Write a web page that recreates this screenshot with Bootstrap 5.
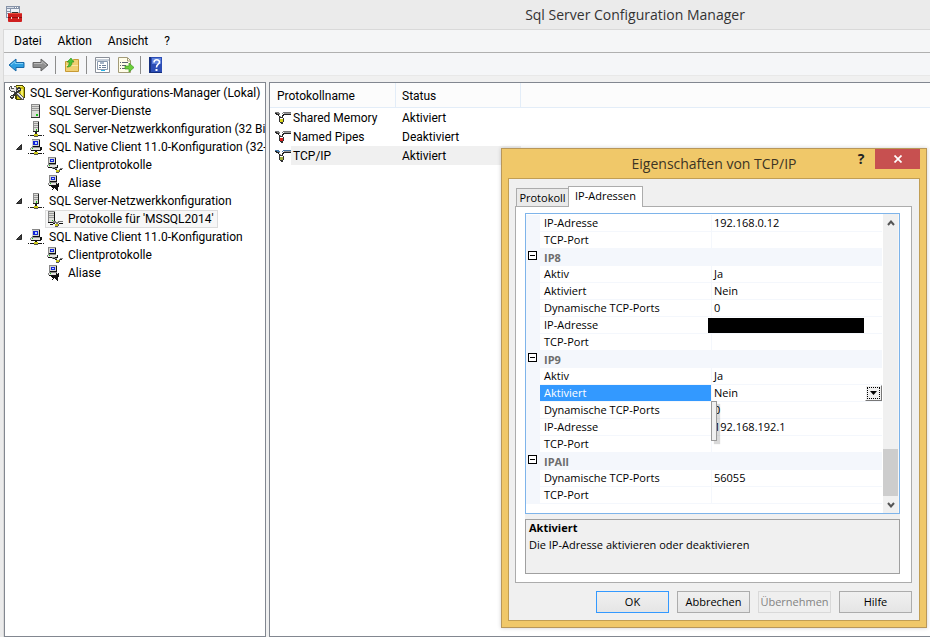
<!DOCTYPE html>
<html lang="de">
<head>
<meta charset="utf-8">
<meta name="viewport" content="width=device-width, initial-scale=1">
<title>Sql Server Configuration Manager</title>
<link rel="stylesheet" href="https://cdn.jsdelivr.net/npm/bootstrap@5.3.0/dist/css/bootstrap.min.css">
<style>
body{font:12px/18px "Open Sans","Noto Sans",sans-serif;color:#000;background:#ebebeb}
button{font:inherit;color:inherit;border:0;background:none;padding:0}
svg{display:block;flex:none}
.app-title{height:29px;font-size:14px;color:#333;padding-left:340px}
.app-icon{left:6px;top:6px}
.app-body{margin-left:3px;border:1px solid #d9d9d9;border-width:1px 0 0 1px;background:#f0f0f0}
.ui-text{font-family:Roboto,"Open Sans",sans-serif}
.menu-strip{background:#f5f6f7;height:23px;border-bottom:1px solid #b0b0b0;padding-left:10px;gap:16px}
.tool-strip{background:#f5f6f8;height:23px;border-bottom:1px solid #e8e8e8;padding:2px 0 0 4px;gap:7px}
.tool-sep{width:1px;height:18px;background:#8d8d8d;margin:0 1px 0 -1px}
.pane{background:#fff;border:1px solid #828790}
.panes{margin-top:6px}
.tree-pane{flex:0 0 262px;padding-top:1px}
.tree-pane ul{list-style:none;margin:0;padding:0}
.tree-row{height:18px;white-space:nowrap;gap:5px}
.tree-root{padding-left:4px}
.tree-l1{padding-left:10px}
.tree-l2{padding-left:42px}
.tree-exp{width:8px;flex:none}
.tree-sel{background:#f7f7f7;outline:1px solid #dcdcdc;outline-offset:-1px;margin-left:-2px;padding:0 4px 0 2px}
.list-pane{margin-left:3px;border-right:0}
.proto-list{width:100%;table-layout:fixed;border-collapse:separate;border-spacing:0}
.proto-list th{font-weight:400;height:25px;padding:1px 6px 0 7px;border:solid #e3edf8;border-width:0 1px 1px 0;background:#fcfcfc}
.proto-list th:last-child{border-right:0}
.proto-list td{height:19px;padding:0 6px}
.proto-list th:nth-child(2){padding-left:6px}
.proto-list td:first-child{padding-left:5px}
.proto-list td span{gap:2px}
.c-name{width:126px}.c-stat{width:125px}
.picked{background:#f0f0f0}
.picked-first{background:linear-gradient(90deg,#fff 21px,#f0f0f0 21px)}
.dlg{position:absolute;right:3px;top:148px;width:426px;background:#f0c869;border:1px solid #b8975a;padding:0 6px 6px;box-shadow:0 0 4px rgba(0,0,0,.2);font-size:11px;line-height:16px}
.dlg-head{height:29px;font-size:14px;color:#3c3424}
.dlg-tools{right:6px;top:0}
.dlg-x{width:45px;height:20px;background:#c75050;color:#fff}
.dlg-q{width:28px;height:20px;font-size:14px;font-weight:700;color:#222}
.dlg-in{background:#f0f0f0;border:1px solid #c19e54;padding:7px 7px 7px 6px}
.tab-row{padding-left:1px;margin-bottom:-1px;position:relative}
.tab-off{height:19px;border:1px solid #acacac;border-right:0;background:#eaeaea;width:52px}
.tab-on{height:21px;border:1px solid #acacac;border-bottom:0;background:#fff;width:75px;padding-bottom:2px}
.tab-body{background:#fff;border:1px solid #acacac;padding:6px 11px 8px 9px}
.pgrid{border:1px solid #7eb4ea;height:301px;background:#fff}
.ptab{flex:1;align-self:flex-start;table-layout:fixed;border-collapse:separate;border-spacing:0;margin-top:1px;width:100%}
.ptab td,.ptab th{height:17px;line-height:16px;padding:0 0 0 2px;border-bottom:1px solid #f4f7fc;font-weight:400;white-space:nowrap}
.ptab th{border-right:1px solid #f4f7fc;padding-left:4px}
.ptab td:first-child{background:#f4f7fc;padding:0}
.ptab .cat th{background:#f4f7fc;font-weight:700;color:#6d6d6d;padding-top:2px;line-height:14px}
.ptab .hot th{background:#39f;color:#fff}
.g-gut{width:14px}.g-key{width:172px}
.fold{display:block;width:9px;height:9px;border:1px solid #000;margin:-3px 0 0 2px;background:linear-gradient(#000,#000) center/5px 1px no-repeat #fff}
.drop{width:17px;height:16px;background:#f0f0f0;border:1px solid;border-color:#fff #777 #777 #fff;outline:0}
.drop span{width:13px;height:12px;border:1px dotted #000}
.redact{width:156px;height:15px;background:#000;margin-left:-6px}
.drag-tip{left:185px;top:187px;width:6px;height:40px;background:#f0f0f0;border:1px solid #9a9a9a;box-shadow:3px 3px 1px rgba(0,0,0,.15)}
.sbar{width:16px;background:#f0f0f0;margin-left:1px;border-right:1px solid #f7f7f7}
.sthumb{height:47px;background:#cdcdcd;margin-top:auto}
.sbtn{height:17px}
.hint-gap{height:5px;background:#f0f0f0}
.hint{background:#f0f0f0;border:1px solid #a0a0a0;height:55px;padding:0 3px;line-height:17px}
.hint strong{line-height:16px}
.dlg-foot{gap:8px;padding:8px 0 0}
.dbtn{width:73px;height:22px;border:1px solid #acacac;background:linear-gradient(#f0f0f0,#e5e5e5)}
.dbtn-def{border-color:#39f}
.dbtn:disabled{border-color:#d9d9d9;background:#efefef;color:#838383}
</style>
<script src="https://cdn.jsdelivr.net/npm/bootstrap@5.3.0/dist/js/bootstrap.bundle.min.js"></script>
</head>
<body>
<svg width="0" height="0" class="position-absolute" aria-hidden="true" shape-rendering="crispEdges">
<symbol id="i-server" viewBox="0 0 16 16"><path fill="#8c8c8c" d="M3 1h9v14H3z"/><path fill="#dcdcd8" d="M4 2h7v12H4z"/><path fill="#999" d="M4 3h7v1H4zM4 5h7v1H4zM4 7h7v1H4z"/><path fill="#333" d="M11 2h1v13H3v-1h8z"/><path fill="#19c319" d="M8 11h2v2H8z"/></symbol>
<symbol id="i-net" viewBox="0 0 16 16"><path fill="#8c8c8c" d="M5 0h6v11H5z"/><path fill="#dcdcd8" d="M6 1h4v9H6z"/><path fill="#999" d="M6 2h4v1H6zM6 4h4v1H6zM6 6h4v1H6z"/><path fill="#222" d="M10 1h1v10H5v-1h5zM7 11h2v2H7zM0 14h1v1H0zM2 14h4v1H2zM10 14h4v1h-4zM15 14h1v1h-1z"/><path fill="#19c319" d="M8 8h1v2H8z"/><path fill="#c9c416" d="M6 13h4v2H6z"/><path fill="#555" d="M6 15h4v1H6z"/></symbol>
<symbol id="i-client" viewBox="0 0 16 16"><path fill="#888" d="M4 0h8v8H4z"/><path fill="#d4d4d0" d="M4 1h7v6H4z"/><path fill="#1525d8" d="M5 2h5v4H5z"/><path fill="#b8d8ff" d="M7 3h2v2H7z"/><path fill="#111" d="M11 1h1v7H5V7h6z"/><path fill="#999" d="M3 8h9v1H3zM2 9h1v2H2z"/><path fill="#e4e4e0" d="M3 9h10v2H3z"/><path fill="#19c319" d="M4 9h1v1H4z"/><path fill="#111" d="M12 8h2v3h-1v1H3v-1h9zM7 12h2v1H7zM0 14h1v1H0zM2 14h4v1H2zM10 14h4v1h-4zM15 14h1v1h-1z"/><path fill="#c9c416" d="M6 13h4v2H6z"/><path fill="#555" d="M6 15h4v1H6z"/></symbol>
<symbol id="i-pc" viewBox="0 0 16 16"><path fill="#888" d="M1 0h8v7H1z"/><path fill="#d4d4d0" d="M2 1h6v6H2z"/><path fill="#1525d8" d="M3 2h4v3H3z"/><path fill="#b8d8ff" d="M4 3h2v1H4z"/><path fill="#111" d="M8 1h1v6H2V6h6z"/><path fill="#888" d="M1 7h8v1H1zM0 8h1v2H0z"/><path fill="#e4e4e0" d="M1 8h9v2H1z"/><path fill="#19c319" d="M2 8h1v1H2z"/><path fill="#111" d="M10 8h1v3H1v-1h9z"/></symbol>
<symbol id="i-cprot" viewBox="0 0 16 16"><use href="#i-pc" width="16" height="16"/><path fill="#888" d="M5 10h3v1h2v2h2v-1h1v-1h3v1h-2v1h-1v1h-3v-1H8v-1H5z"/><path fill="#222" d="M6 11h2v1H6zM13 12h2v1h-2zM8 12h2v1H8z"/><path fill="#c9c416" d="M9 13h3v2H9z"/><path fill="#555" d="M12 13h1v2h-1v1H9v-1h3z"/></symbol>
<symbol id="i-alias" viewBox="0 0 16 16"><use href="#i-pc" x="1" width="16" height="16"/><path fill="#111" d="M4 10h5V8h1v1h1v1h1v2h-1v4h-1v-1H9v-1H8v-1H7v1H6v1H5v-1h1v-1H5v-1H4z"/></symbol>
<symbol id="i-sprot" viewBox="0 0 16 16"><path fill="#888" d="M1 0h7v12H1z"/><path fill="#dcdcd8" d="M2 1h5v10H2z"/><path fill="#999" d="M2 2h5v1H2zM2 4h5v1H2zM2 6h5v1H2z"/><path fill="#111" d="M7 1h1v11H1v-1h6zM3 13h3v1H3z"/><path fill="#19c319" d="M5 9h1v1H5z"/><path fill="#777" d="M6 10h3v1h2v-1h5v1h-4v1h-1v2H9v-2H6z"/><path fill="#111" d="M12 12h4v1h-4zM6 12h2v1H6z"/><path fill="#c9c416" d="M8 13h3v2H8z"/><path fill="#555" d="M11 13h1v2h-1v1H8v-1h3z"/></symbol>
<symbol id="i-plug" viewBox="0 0 16 14"><path fill="currentColor" d="M0 1h4v1h1v1H2V2H0zM8 1h8v1H8zM7 2h1v1H7z"/><path fill="#222" d="M0 2h2v1h2v2h1v1H4V5H3V4H1V3H0zM9 3h7v1H9v1H8v1H7V4h1V3z"/><path fill="#999" d="M4 3h1v2h1v1H5V4H4zM9 2h7v1H9z"/><path fill="#333" d="M4 6h4v1H4zM4 7h1v4H4zM8 7h1v4H8zM5 11h3v1H5zM6 12h2v1H6z"/></symbol>
<symbol id="i-root" viewBox="0 0 16 16"><path fill="#4a4600" d="M7 0h7v1h1v1h1v11h-1v1h-1v1H7v-1H6V1h1z"/><path fill="#c9be12" d="M7 1h7v1h1v11h-1v1H8V8H7z"/><path fill="#f6f06a" d="M8 1h5v1H8zM12 4h2v7h-2z"/><path fill="#555" d="M1 1h2v2h2V1h2v1h1v4h1v1h1v1h1v1h1v1h1v1h1v1h1v3h-3v-1h-1v-1h-1v-1H9v-1H8v-1H7V9H6V8H5V7H2V6H1V5H0V2h1z"/><path fill="#e8e8e8" d="M1 2h1v2h3V2h2v4h1v1h1v1h1v1h1v1h1v1h1v1h1v2h-1v-1h-1v-1h-1v-1h-1v-1H9v-1H8V9H7V8H6V6H2V5H1z"/><path fill="#333" d="M9 2h2v1h1v3h-1v1H9v1H8v1H7v1H6v1H5v2H4v1H2v-1H1v-2h1v-1h2V9h1V8h1V7h1V6h1V3h1z"/><path fill="#ddd" d="M9 4h2v1H9v1H8v1H7v1H6v1H5v1H4v2H2v-1h2v-1h1V9h1V8h1V7h1V5h1z"/></symbol>
</svg>

<div class="vh-100 d-flex flex-column overflow-hidden position-relative">
<header class="app-title d-flex align-items-center justify-content-center flex-shrink-0 position-relative">
<svg class="app-icon position-absolute" width="16" height="16" viewBox="0 0 16 16"><path fill="#8693a8" d="M0 0h14v12H0z"/><path fill="#eef2f8" d="M1 3h12v8H1z"/><path fill="#d6dbe6" d="M1 1h7v1H1z"/><path fill="#fff" d="M9 1h1v1H9zM11 1h1v1h-1z"/><path fill="#8693a8" d="M1 5h4v1H1zM1 7h3v1H1zM4 3h1v4H4z"/><path d="M6 8V6.500h6V8" fill="none" stroke="#333"/><rect x="2" y="7" width="14" height="9" rx="1" fill="#cf1f1f"/><path fill="#8e1010" d="M2 11h14v1H2z"/><path fill="#e8503f" d="M3 7h12v1H3z"/><path fill="#f5d6d0" d="M5 11h1v2H5zM12 11h1v2h-1z"/></svg>
<span>Sql Server Configuration Manager</span>
</header>
<div class="app-body ui-text flex-fill d-flex flex-column">
<nav class="menu-strip d-flex align-items-center flex-shrink-0" aria-label="Menü"><button>Datei</button><button>Aktion</button><button>Ansicht</button><button>?</button></nav>
<div class="tool-strip d-flex align-items-center flex-shrink-0" role="toolbar">
<button aria-label="Zurück"><svg width="17" height="16" viewBox="0 0 17 16"><path d="M1 8l7-6v3.500h8v5H8V14z" fill="#2f9fe0" stroke="#1769a8"/><path d="M3 8l4-3.500V6.500h8" fill="none" stroke="#7fd0f7"/></svg></button>
<button aria-label="Vor"><svg width="17" height="16" viewBox="0 0 17 16"><path d="M16 8L9 2v3.500H1v5h8V14z" fill="#8f8f8f" stroke="#666"/><path d="M14 8l-4-3.500V6.500H2" fill="none" stroke="#bbb"/></svg></button>
<span class="tool-sep"></span>
<button aria-label="Aufwärts"><svg width="16" height="16" viewBox="0 0 16 16"><path d="M1.500 4.500h7l1-2h5v12h-13z" fill="#f0cf72" stroke="#c79a35"/><path d="M2 8h12v1H2z" fill="#fbe6a4"/><path d="M3 10C7 10 8 8 8 5h2L7 1 3 5h2c0 2 0 4-2 5z" fill="#4fc436" stroke="#2b8f1d" stroke-width=".6"/></svg></button>
<span class="tool-sep"></span>
<button aria-label="Eigenschaften"><svg width="16" height="16" viewBox="0 0 16 16"><path d="M.500 .500h14v15h-14z" fill="#fff" stroke="#8a8f98"/><path d="M1 3h13M2.500 4.500h10v8h-10z" fill="none" stroke="#8a9ab0"/><path d="M5 5h4v2H5z" fill="#a8b6c8"/><path d="M4 8.500h2M7 8.500h4M4 10.500h2M7 10.500h4" stroke="#6d7f99"/><path d="M6 13h4v1H6z" fill="#27b4e8"/></svg></button>
<button aria-label="Liste exportieren"><svg width="16" height="16" viewBox="0 0 16 16"><path d="M.500 .500h9l3 3v12H.500z" fill="#fffde8" stroke="#a39b78"/><path d="M9.500 1v3h3" fill="none" stroke="#a39b78"/><path d="M2 5.500h1M4 5.500h6M2 8.500h1M4 8.500h4M2 11.500h1M4 11.500h5" stroke="#5c6470"/><path d="M7 9h4V6l5 4.500-5 4.500v-3H7z" fill="#6bd03a" stroke="#3f9a20" stroke-width=".7"/></svg></button>
<span class="tool-sep"></span>
<button aria-label="Hilfe"><svg width="13" height="16" viewBox="0 0 13 16"><path fill="#2c4db5" d="M0 0h13v16H0z"/><path fill="#16307f" d="M0 0h2v16H0zM2 15h11v1H2z"/><path fill="#5f82dc" d="M3 1h9v6H3z"/><path d="M5 5.500C5 2 10.500 2 10.500 5 10.500 7.500 7.500 7 7.500 10.500" fill="none" stroke="#fff" stroke-width="1.600"/><path fill="#fff" d="M6.500 12h2v2h-2z"/></svg></button>
</div>
<main class="panes d-flex flex-fill overflow-hidden">
<aside class="pane tree-pane overflow-hidden">
<ul role="tree">
<li class="tree-row tree-root d-flex align-items-center"><svg width="16" height="16" shape-rendering="crispEdges"><use href="#i-root"/></svg>SQL Server-Konfigurations-Manager (Lokal)</li>
<li class="tree-row tree-l1 d-flex align-items-center"><span class="tree-exp"></span><svg width="16" height="16" shape-rendering="crispEdges"><use href="#i-server"/></svg>SQL Server-Dienste</li>
<li class="tree-row tree-l1 d-flex align-items-center"><span class="tree-exp"></span><svg width="16" height="16" shape-rendering="crispEdges"><use href="#i-net"/></svg>SQL Server-Netzwerkkonfiguration (32 Bit)</li>
<li class="tree-row tree-l1 d-flex align-items-center"><svg class="tree-exp" width="8" height="8"><path d="M6.500 1.500v5h-5z" fill="#404040" stroke="#262626"/></svg><svg width="16" height="16" shape-rendering="crispEdges"><use href="#i-client"/></svg>SQL Native Client 11.0-Konfiguration (32-Bit)</li>
<li class="tree-row tree-l2 d-flex align-items-center"><svg width="16" height="16" shape-rendering="crispEdges"><use href="#i-cprot"/></svg>Clientprotokolle</li>
<li class="tree-row tree-l2 d-flex align-items-center"><svg width="16" height="16" shape-rendering="crispEdges"><use href="#i-alias"/></svg>Aliase</li>
<li class="tree-row tree-l1 d-flex align-items-center"><svg class="tree-exp" width="8" height="8"><path d="M6.500 1.500v5h-5z" fill="#404040" stroke="#262626"/></svg><svg width="16" height="16" shape-rendering="crispEdges"><use href="#i-net"/></svg>SQL Server-Netzwerkkonfiguration</li>
<li class="tree-row tree-l2 d-flex align-items-center"><span class="tree-sel tree-row d-flex align-items-center"><svg width="16" height="16" shape-rendering="crispEdges"><use href="#i-sprot"/></svg>Protokolle für 'MSSQL2014'</span></li>
<li class="tree-row tree-l1 d-flex align-items-center"><svg class="tree-exp" width="8" height="8"><path d="M6.500 1.500v5h-5z" fill="#404040" stroke="#262626"/></svg><svg width="16" height="16" shape-rendering="crispEdges"><use href="#i-client"/></svg>SQL Native Client 11.0-Konfiguration</li>
<li class="tree-row tree-l2 d-flex align-items-center"><svg width="16" height="16" shape-rendering="crispEdges"><use href="#i-cprot"/></svg>Clientprotokolle</li>
<li class="tree-row tree-l2 d-flex align-items-center"><svg width="16" height="16" shape-rendering="crispEdges"><use href="#i-alias"/></svg>Aliase</li>
</ul>
</aside>
<section class="pane list-pane flex-fill">
<table class="proto-list">
<colgroup><col class="c-name"><col class="c-stat"><col></colgroup>
<thead><tr><th>Protokollname</th><th>Status</th><th></th></tr></thead>
<tbody>
<tr><td><span class="d-flex align-items-center"><svg width="16" height="14" viewBox="0 0 16 14" shape-rendering="crispEdges" color="#777"><use href="#i-plug" width="16" height="14"/><path fill="#d8d41c" d="M5 8h3v3H5z"/></svg>Shared Memory</span></td><td>Aktiviert</td><td></td></tr>
<tr><td><span class="d-flex align-items-center"><svg width="16" height="14" viewBox="0 0 16 14" shape-rendering="crispEdges" color="#777"><use href="#i-plug" width="16" height="14"/><path fill="#d81c1c" d="M5 8h3v3H5z"/></svg>Named Pipes</span></td><td>Deaktiviert</td><td></td></tr>
<tr><td class="picked-first"><span class="d-flex align-items-center"><svg width="16" height="14" viewBox="0 0 16 14" shape-rendering="crispEdges" color="#4878a8"><use href="#i-plug" width="16" height="14"/><path fill="#9fae3c" d="M5 8h3v3H5z"/></svg>TCP/IP</span></td><td class="picked">Aktiviert</td><td></td></tr>
</tbody>
</table>
</section>
</main>
</div>

<div class="dlg" role="dialog" aria-labelledby="dlgTitle">
<div class="dlg-head d-flex align-items-center justify-content-center position-relative"><span id="dlgTitle">Eigenschaften von TCP/IP</span></div>
<div class="dlg-tools position-absolute d-flex"><button class="dlg-q" aria-label="Hilfe">?</button><button class="dlg-x d-flex align-items-center justify-content-center" aria-label="Schließen"><svg width="8" height="8" viewBox="0 0 8 8"><path d="M.500 .500l7 7M7.500 .500l-7 7" stroke="#fff" stroke-width="1.700"/></svg></button></div>
<div class="dlg-in">
<div class="tab-row d-flex align-items-end" role="tablist"><button class="tab-off" role="tab">Protokoll</button><button class="tab-on" role="tab" aria-selected="true">IP-Adressen</button></div>
<div class="tab-body">
<div class="pgrid d-flex position-relative">
<table class="ptab">
<colgroup><col class="g-gut"><col class="g-key"><col></colgroup>
<tbody>
<tr><td></td><th>IP-Adresse</th><td>192.168.0.12</td></tr>
<tr><td></td><th>TCP-Port</th><td></td></tr>
<tr class="cat"><td><button class="fold" aria-label="IP8 reduzieren"></button></td><th colspan="2">IP8</th></tr>
<tr><td></td><th>Aktiv</th><td>Ja</td></tr>
<tr><td></td><th>Aktiviert</th><td>Nein</td></tr>
<tr><td></td><th>Dynamische TCP-Ports</th><td>0</td></tr>
<tr><td></td><th>IP-Adresse</th><td><div class="redact"></div></td></tr>
<tr><td></td><th>TCP-Port</th><td></td></tr>
<tr class="cat"><td><button class="fold" aria-label="IP9 reduzieren"></button></td><th colspan="2">IP9</th></tr>
<tr><td></td><th>Aktiv</th><td>Ja</td></tr>
<tr class="hot"><td></td><th>Aktiviert</th><td><div class="d-flex justify-content-between"><span>Nein</span><button class="drop d-flex align-items-center justify-content-center" aria-label="Auswahl öffnen"><span class="d-flex align-items-center justify-content-center"><svg width="7" height="4"><path d="M0 0h7L3.500 4z"/></svg></span></button></div></td></tr>
<tr><td></td><th>Dynamische TCP-Ports</th><td>0</td></tr>
<tr><td></td><th>IP-Adresse</th><td>192.168.192.1</td></tr>
<tr><td></td><th>TCP-Port</th><td></td></tr>
<tr class="cat"><td><button class="fold" aria-label="IPAll reduzieren"></button></td><th colspan="2">IPAll</th></tr>
<tr><td></td><th>Dynamische TCP-Ports</th><td>56055</td></tr>
<tr><td></td><th>TCP-Port</th><td></td></tr>
</tbody>
</table>
<div class="drag-tip position-absolute"></div>
<div class="sbar d-flex flex-column flex-shrink-0"><button class="sbtn d-flex align-items-center justify-content-center" aria-label="Nach oben"><svg width="8" height="6"><path d="M1 5l3-3.500L7 5" fill="none" stroke="#555" stroke-width="2"/></svg></button><div class="sthumb"></div><button class="sbtn d-flex align-items-center justify-content-center" aria-label="Nach unten"><svg width="8" height="6"><path d="M1 1l3 3.500L7 1" fill="none" stroke="#555" stroke-width="2"/></svg></button></div>
</div>
<div class="hint-gap"></div>
<div class="hint"><strong class="d-block">Aktiviert</strong>Die IP-Adresse aktivieren oder deaktivieren</div>
</div>
<div class="dlg-foot d-flex justify-content-end"><button class="dbtn dbtn-def">OK</button><button class="dbtn">Abbrechen</button><button class="dbtn" disabled>Übernehmen</button><button class="dbtn">Hilfe</button></div>
</div>
</div>
</div>
</body>
</html>
